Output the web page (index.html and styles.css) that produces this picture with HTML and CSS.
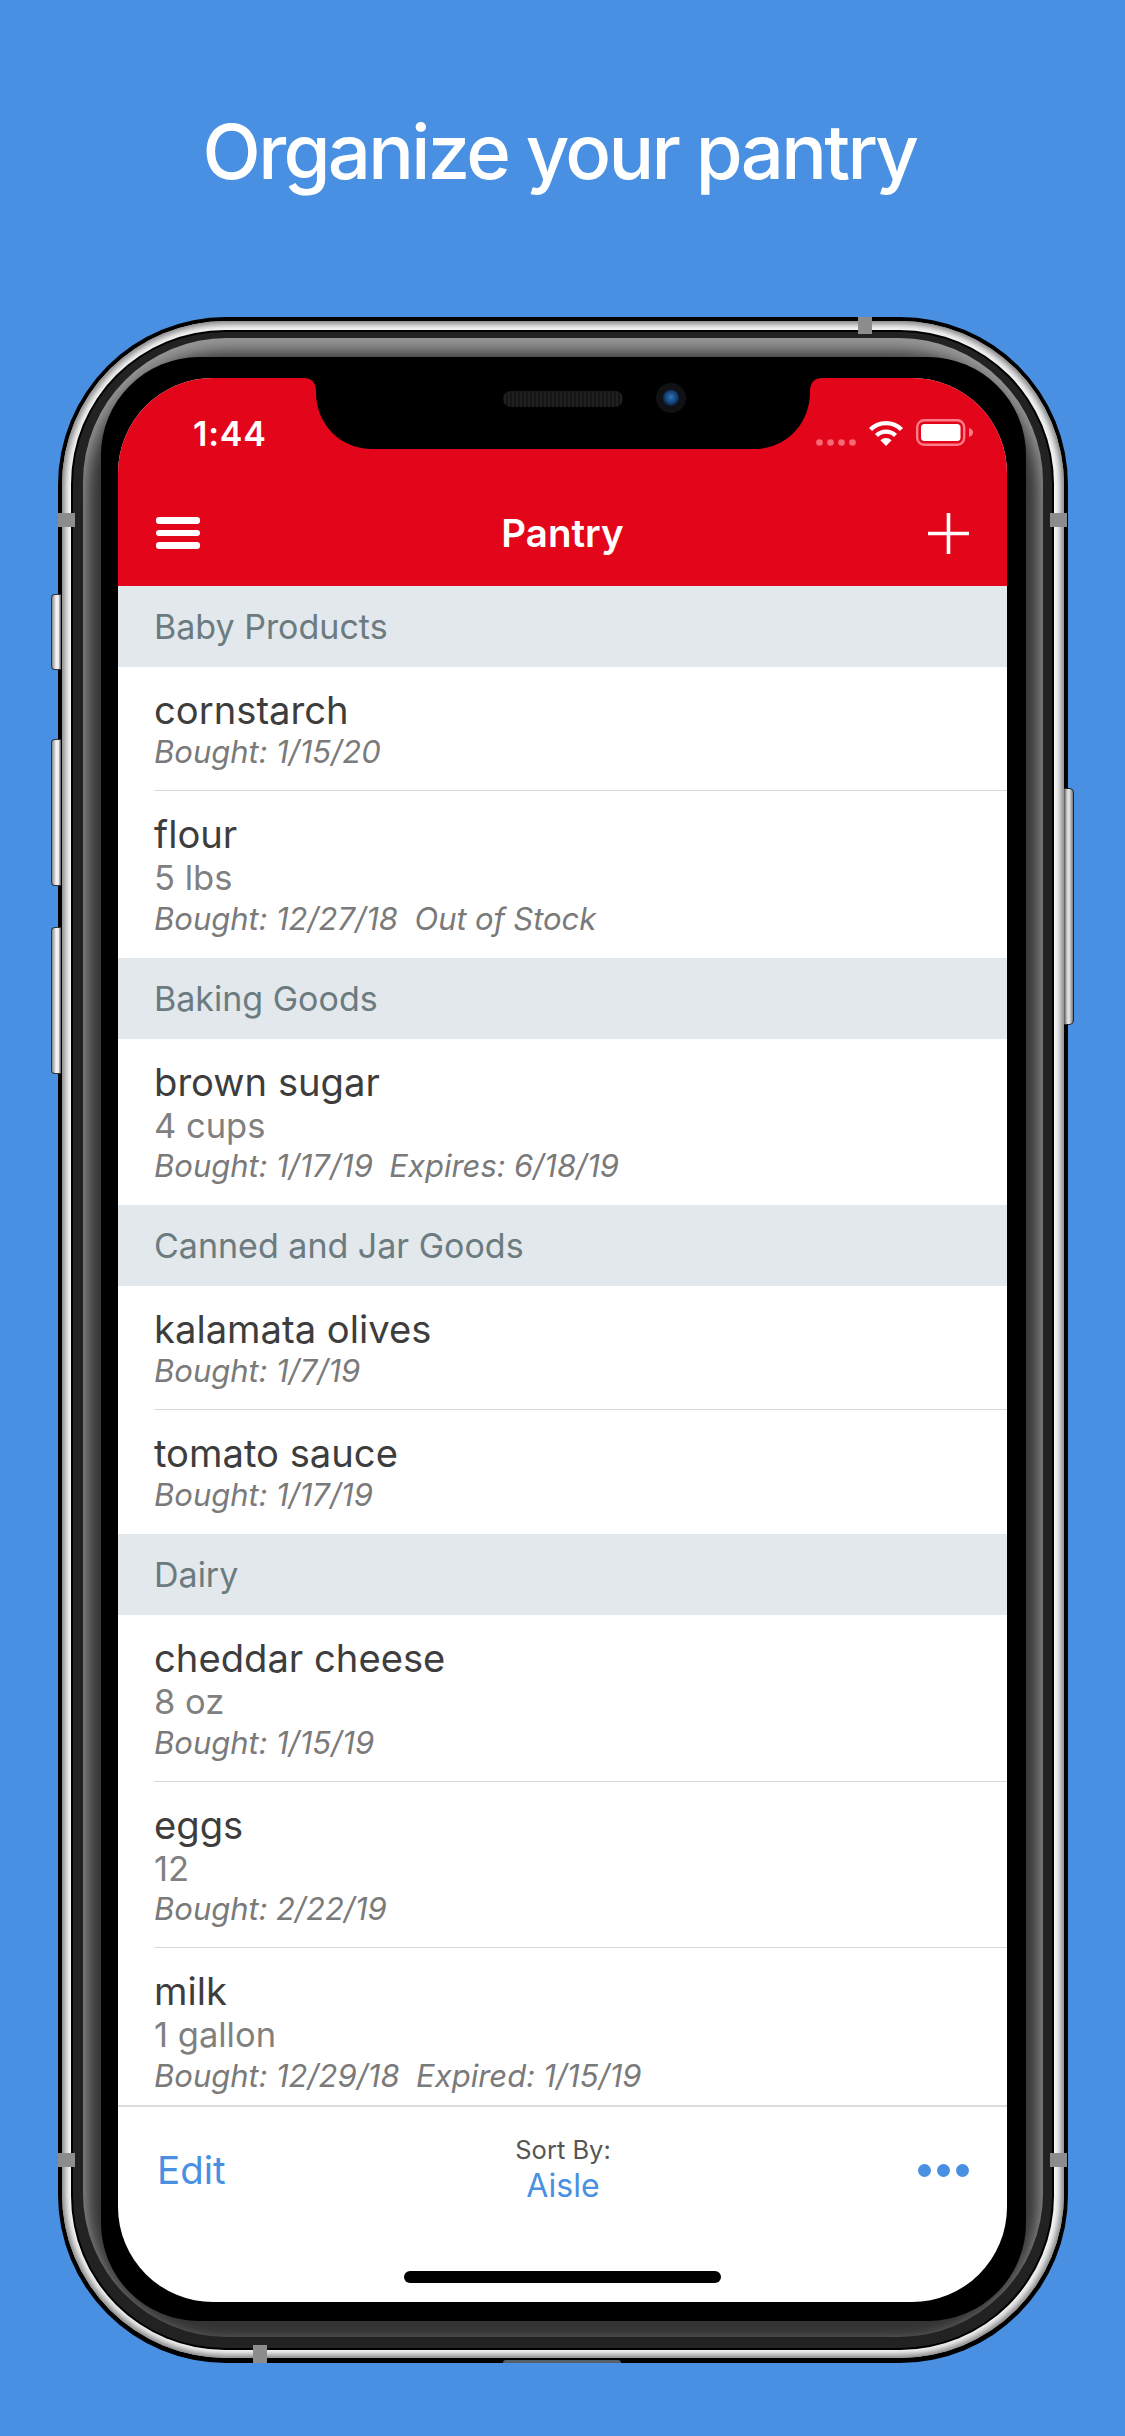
FILE: index.html
```html
<!DOCTYPE html>
<html lang="en">
<head>
  <meta charset="UTF-8" />
  <meta name="viewport" content="width=device-width,initial-scale=1" />
  <title>Organize your pantry</title>
  <link rel="stylesheet" href="styles.css">
</head>
<body>
  <h1 class="headline">Organize your pantry</h1>

  <div class="phone">
    <!-- side buttons and antenna lines sit over the frame -->
    <span class="btn btn-mute"></span>
    <span class="btn btn-up"></span>
    <span class="btn btn-down"></span>
    <span class="btn btn-power"></span>
    <span class="line line-lt"></span>
    <span class="line line-lb"></span>
    <span class="line line-rt"></span>
    <span class="line line-rb"></span>
    <span class="line line-top"></span>
    <span class="line line-bottom"></span>
    <span class="port"></span>

    <div class="ring-silver">
      <div class="ring-dark">
        <div class="ring-gray">
          <div class="bezel">
            <div class="screen">
              <svg class="notch" width="518" height="71" viewBox="0 0 518 71">
                <defs>
                  <radialGradient id="lens" cx="50%" cy="45%" r="55%">
                    <stop offset="0" stop-color="#2f74b8" />
                    <stop offset="0.7" stop-color="#123f73" />
                    <stop offset="1" stop-color="#0a1c33" />
                  </radialGradient>
                  <pattern id="grille" width="4" height="16" patternUnits="userSpaceOnUse">
                    <rect width="4" height="16" fill="#151515" />
                    <rect width="2" height="16" fill="#202020" />
                  </pattern>
                </defs>
                <path d="M0 0H518Q506 0 506 14C506 46 482 71 450 71H68C36 71 12 46 12 14Q12 0 0 0Z" fill="#000" />
                <rect x="199" y="13" width="120" height="16" rx="8" fill="url(#grille)" />
                <circle cx="367" cy="20" r="15" fill="#101114" />
                <circle cx="367" cy="20" r="8" fill="url(#lens)" />
              </svg>

              <header class="appbar">
                <div class="status">
                  <span class="clock">1:44</span>
                  <div class="status-icons">
                    <svg class="signal" width="40" height="7" viewBox="0 0 40 7">
                      <circle cx="3.500" cy="3.500" r="3.300" />
                      <circle cx="14.500" cy="3.500" r="3.300" />
                      <circle cx="25.500" cy="3.500" r="3.300" />
                      <circle cx="36.500" cy="3.500" r="3.300" />
                    </svg>
                    <svg class="wifi" width="36" height="26" viewBox="0 0 36 26">
                      <path d="M2.500 9.500A22 22 0 0 1 33.500 9.500" fill="none" stroke="#fff" stroke-width="4.400" />
                      <path d="M8.500 15.500A13.500 13.500 0 0 1 27.500 15.500" fill="none" stroke="#fff" stroke-width="4.400" />
                      <path d="M18 26L12.400 20.200A8 8 0 0 1 23.600 20.200Z" fill="#fff" />
                    </svg>
                    <svg class="battery" width="57" height="27" viewBox="0 0 57 27">
                      <rect x="1.200" y="1.200" width="47" height="24.600" rx="7" fill="none" stroke="#ff7d88" stroke-width="2.400" />
                      <rect x="5" y="5" width="39.500" height="17" rx="3.500" fill="#fff" />
                      <path d="M53 9c2.400.6 4 2.200 4 4.500s-1.600 3.900-4 4.500Z" fill="#ff7d88" />
                    </svg>
                  </div>
                </div>
                <nav class="nav">
                  <div class="menu"><span></span><span></span><span></span></div>
                  <div class="nav-title">Pantry</div>
                  <svg class="plus" width="41" height="41" viewBox="0 0 41 41">
                    <path d="M20.500 0V41M0 20.500H41" stroke="#fff" stroke-width="3.600" />
                  </svg>
                </nav>
              </header>

              <main class="list">
                <div class="section">Baby Products</div>
                <div class="row">
                  <div class="row-in">
                    <div class="name">cornstarch</div>
                    <div class="meta">Bought: 1/15/20</div>
                  </div>
                </div>
                <div class="row">
                  <div class="row-in">
                    <div class="name">flour</div>
                    <div class="qty">5 lbs</div>
                    <div class="meta">Bought: 12/27/18&nbsp; Out of Stock</div>
                  </div>
                </div>

                <div class="section">Baking Goods</div>
                <div class="row">
                  <div class="row-in">
                    <div class="name">brown sugar</div>
                    <div class="qty">4 cups</div>
                    <div class="meta">Bought: 1/17/19&nbsp; Expires: 6/18/19</div>
                  </div>
                </div>

                <div class="section">Canned and Jar Goods</div>
                <div class="row">
                  <div class="row-in">
                    <div class="name">kalamata olives</div>
                    <div class="meta">Bought: 1/7/19</div>
                  </div>
                </div>
                <div class="row">
                  <div class="row-in">
                    <div class="name">tomato sauce</div>
                    <div class="meta">Bought: 1/17/19</div>
                  </div>
                </div>

                <div class="section">Dairy</div>
                <div class="row">
                  <div class="row-in">
                    <div class="name">cheddar cheese</div>
                    <div class="qty">8 oz</div>
                    <div class="meta">Bought: 1/15/19</div>
                  </div>
                </div>
                <div class="row">
                  <div class="row-in">
                    <div class="name">eggs</div>
                    <div class="qty">12</div>
                    <div class="meta">Bought: 2/22/19</div>
                  </div>
                </div>
                <div class="row">
                  <div class="row-in">
                    <div class="name">milk</div>
                    <div class="qty">1 gallon</div>
                    <div class="meta">Bought: 12/29/18&nbsp; Expired: 1/15/19</div>
                  </div>
                </div>
              </main>

              <footer class="toolbar">
                <div class="tools">
                  <a class="edit">Edit</a>
                  <div class="sort">
                    <div class="sort-label">Sort By:</div>
                    <div class="sort-value">Aisle</div>
                  </div>
                  <div class="more"><span></span><span></span><span></span></div>
                </div>
                <div class="home-bar"></div>
              </footer>
            </div>
          </div>
        </div>
      </div>
    </div>
  </div>
</body>
</html>
```

FILE: styles.css
```css
* { box-sizing: border-box; }
html, body { margin: 0; height: 100%; }
body {
  width: 1125px;
  height: 2436px;
  overflow: hidden;
  background: #4a90e2;
  font-family: Inter, "Liberation Sans", sans-serif;
  color: #3a3a3a;
}

.headline {
  margin: 0;
  height: 317px;
  padding: 99px 6px 0 0;
  text-align: center;
  color: #fff;
  font-size: 76px;
  line-height: 104px;
  font-weight: 450;
  letter-spacing: -2.700px;
}

/* phone frame, ring by ring */
.phone {
  position: relative;
  width: 1010px;
  height: 2046px;
  margin-left: 58px;
  padding: 4px 4px 5px 4px;
  background: #000;
  border-radius: 168px;
}
.ring-silver {
  height: 100%;
  padding: 11px 12px 10px 11px;
  background: #f6f6f6;
  border-radius: 164px;
  box-shadow: inset 0 0 6px 3px #7c7c7c;
}
.ring-dark {
  height: 100%;
  padding: 6px 9px 11px 10px;
  background: #222;
  border-radius: 152px;
  box-shadow: 0 0 0 2px #000;
}
.ring-gray {
  height: 100%;
  padding: 19px 17px 16px 18px;
  background: #343434;
  border-radius: 144px;
  box-shadow: inset 0 10px 16px 4px #989898;
}
.bezel {
  height: 100%;
  padding: 21px 19px 19px 17px;
  background: #000;
  border-radius: 98px;
}
.screen {
  position: relative;
  display: flex;
  flex-direction: column;
  height: 100%;
  overflow: hidden;
  background: #fff;
  border-radius: 95px;
}

.btn {
  position: absolute;
  width: 10px;
  background: linear-gradient(90deg, #888, #f2f2f2 45%, #f2f2f2 70%, #555);
  border: 1px solid #333;
  border-right: none;
  border-radius: 4px 0 0 4px;
}
.btn-mute { left: -7px; top: 277px; height: 76px; }
.btn-up { left: -7px; top: 422px; height: 147px; }
.btn-down { left: -7px; top: 610px; height: 147px; }
.btn-power {
  left: auto;
  right: -6px;
  top: 471px;
  height: 237px;
  background: linear-gradient(90deg, #555, #dedede 40%, #dedede 60%, #777);
  border: 1px solid #222;
  border-left: none;
  border-radius: 0 5px 5px 0;
}

.line { position: absolute; background: #8c8c8c; }
.line-lt { left: 0; top: 196px; width: 17px; height: 14px; }
.line-lb { left: 0; top: 1836px; width: 17px; height: 14px; }
.line-rt { right: 1px; top: 196px; width: 17px; height: 14px; }
.line-rb { right: 1px; top: 1836px; width: 17px; height: 14px; }
.line-top { left: 800px; top: 0; width: 14px; height: 17px; }
.line-bottom { left: 195px; bottom: 0; width: 14px; height: 18px; }
.port {
  position: absolute;
  left: 445px;
  bottom: 0;
  width: 118px;
  height: 3px;
  background: #55606c;
  border-radius: 3px 3px 0 0;
}

.notch { position: absolute; left: 186px; top: 0; }

/* red bar */
.appbar {
  flex: none;
  height: 208px;
  padding-top: 42px;
  background: #e30519;
  color: #fff;
}
.status {
  display: flex;
  align-items: center;
  justify-content: space-between;
  height: 27px;
  padding: 0 34px 0 75px;
}
.clock { font-size: 34px; font-weight: 600; letter-spacing: 0.8px; }
.status-icons { display: flex; align-items: center; gap: 12px; margin-top: -2px; }
.signal { fill: #f66a75; margin-top: 20px; }
.nav {
  display: grid;
  grid-template-columns: 1fr auto 1fr;
  align-items: center;
  height: 106px;
  margin-top: 33px;
  padding: 0 38px;
}
.menu { display: flex; flex-direction: column; gap: 6px; width: 44px; }
.menu span { height: 6.500px; background: #fff; border-radius: 3px; }
.nav-title { font-size: 38.500px; font-weight: 600; }
.plus { justify-self: end; }

/* list */
.list { flex: 1; min-height: 0; overflow: hidden; }
.section {
  height: 81px;
  padding-left: 36px;
  background: #e2e8eb;
  color: #6b7b80;
  font-size: 34px;
  line-height: 81px;
}
.row { padding-left: 36px; }
.row-in {
  padding: 20px 0 19px;
  border-bottom: 1px solid #d8d8d8;
}
.row:has(+ .section) .row-in { border-bottom-color: transparent; }
.name { font-size: 38.200px; line-height: 46px; color: #3d3d3d; }
.qty { font-size: 34.500px; line-height: 42.500px; color: #808080; }
.meta { font-size: 31px; line-height: 38px; font-style: italic; color: #7a7a7a; word-spacing: -0.500px; }

/* bottom toolbar */
.toolbar { flex: none; height: 197px; border-top: 2px solid #dcdcdc; }
.tools {
  display: grid;
  grid-template-columns: 1fr auto 1fr;
  align-items: center;
  height: 126px;
  padding: 0 38px 0 39px;
}
.edit { font-size: 38.500px; color: #4a90e2; }
.sort { text-align: center; margin-top: -2px; }
.sort-label { font-size: 25.500px; line-height: 34px; color: #555; }
.sort-value { font-size: 32px; line-height: 38px; color: #4a90e2; }
.more { display: flex; justify-content: flex-end; gap: 6px; }
.more span { width: 13px; height: 13px; background: #4a90e2; border-radius: 50%; }
.home-bar {
  width: 317px;
  height: 12px;
  margin: 38px auto 0;
  background: #000;
  border-radius: 6px;
}
```
